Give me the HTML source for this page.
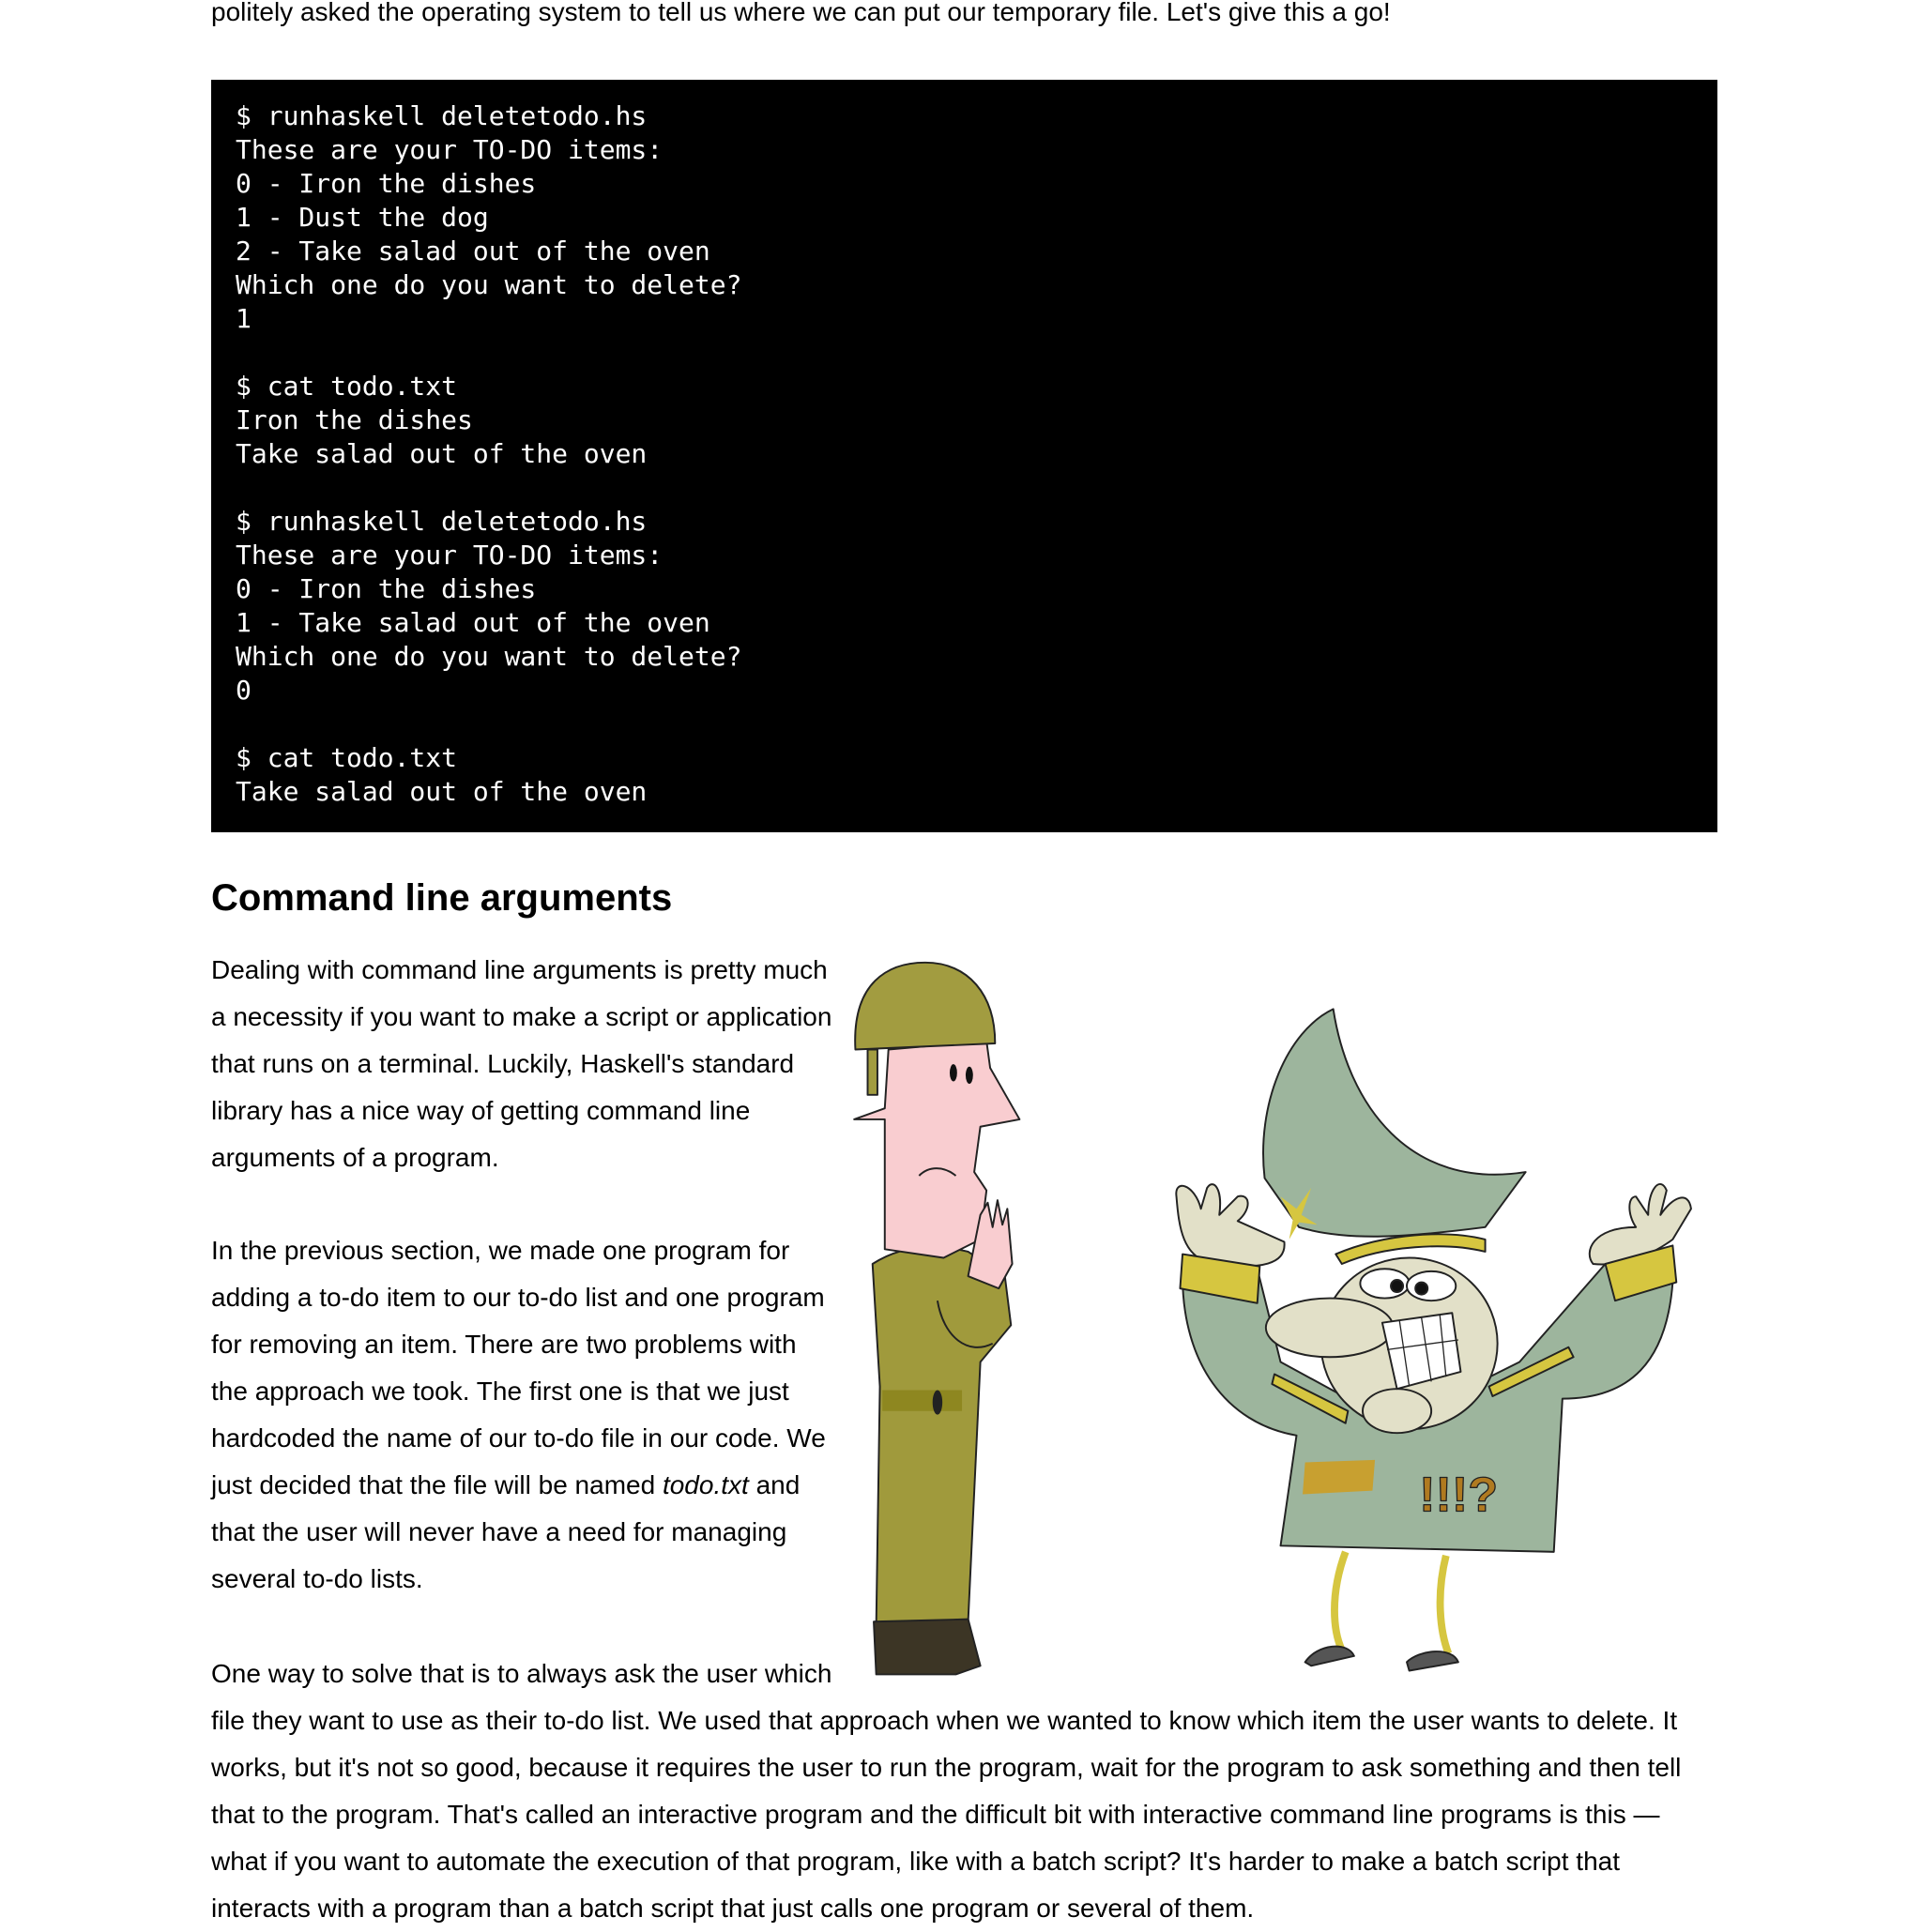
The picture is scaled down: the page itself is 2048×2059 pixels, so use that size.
<!DOCTYPE html>
<html><head><meta charset="utf-8">
<style>
html,body{margin:0;padding:0;background:#fff;}
body{width:2048px;height:2048px;position:relative;overflow:hidden;font-family:"Liberation Sans",Arial,sans-serif;font-size:28px;color:#000;}
.t{position:absolute;left:225px;line-height:50px;white-space:nowrap;}
pre{position:absolute;left:225px;top:85px;width:1605px;height:802px;margin:0;background:#000;color:#fff;box-sizing:border-box;padding:21px 0 0 26px;font-family:"DejaVu Sans Mono","Liberation Mono",monospace;font-size:28px;line-height:36px;}
h2{position:absolute;left:225px;top:932px;margin:0;font-size:40px;line-height:50px;font-weight:bold;white-space:nowrap;}
svg{position:absolute;}
</style></head><body>
<div class="t" style="top:-12px">politely asked the operating system to tell us where we can put our temporary file. Let's give this a go!</div>
<pre>$ runhaskell deletetodo.hs
These are your TO-DO items:
0 - Iron the dishes
1 - Dust the dog
2 - Take salad out of the oven
Which one do you want to delete?
1

$ cat todo.txt
Iron the dishes
Take salad out of the oven

$ runhaskell deletetodo.hs
These are your TO-DO items:
0 - Iron the dishes
1 - Take salad out of the oven
Which one do you want to delete?
0

$ cat todo.txt
Take salad out of the oven</pre>
<h2>Command line arguments</h2>
<div class="t" style="top:1009px">Dealing with command line arguments is pretty much<br>a necessity if you want to make a script or application<br>that runs on a terminal. Luckily, Haskell's standard<br>library has a nice way of getting command line<br>arguments of a program.</div>
<div class="t" style="top:1308px">In the previous section, we made one program for<br>adding a to-do item to our to-do list and one program<br>for removing an item. There are two problems with<br>the approach we took. The first one is that we just<br>hardcoded the name of our to-do file in our code. We<br>just decided that the file will be named <i>todo.txt</i> and<br>that the user will never have a need for managing<br>several to-do lists.</div>
<div class="t" style="top:1759px">One way to solve that is to always ask the user which<br>file they want to use as their to-do list. We used that approach when we wanted to know which item the user wants to delete. It<br>works, but it's not so good, because it requires the user to run the program, wait for the program to ask something and then tell<br>that to the program. That's called an interactive program and the difficult bit with interactive command line programs is this —<br>what if you want to automate the execution of that program, like with a batch script? It's harder to make a batch script that<br>interacts with a program than a batch script that just calls one program or several of them.</div>

<svg style="left:901px;top:1014px" width="914" height="777" viewBox="690 775 700 595" stroke="#222" stroke-width="1.5" stroke-linejoin="round">
 <path d="M712,1030 C740,1012 770,1015 790,1020 L820,1040 L825,1080 L800,1110 L790,1322 L715,1325 L718,1130 Z" fill="#a09a3c"/>
 <path d="M720,1133 L785,1133 L785,1150 L720,1150 Z" fill="#8e8720" stroke="none"/>
 <ellipse cx="765" cy="1143" rx="4" ry="10" fill="#222" stroke="none"/>
 <path d="M713,1322 L790,1320 L800,1358 L780,1365 L715,1365 Z" fill="#3c3525"/>
 <path d="M725,855 L805,848 L808,870 L832,912 L800,918 L795,955 L805,970 L800,1010 L770,1025 L722,1018 L722,912 L697,912 L722,903 Z" fill="#f9cdd0"/>
 <path d="M750,958 C758,950 770,950 780,958" fill="none"/>
 <ellipse cx="778" cy="874" rx="3" ry="7" fill="#111" stroke="none"/>
 <ellipse cx="791" cy="876" rx="3" ry="7" fill="#111" stroke="none"/>
 <path d="M790,1040 L800,990 L806,980 L810,1000 L814,978 L818,998 L822,985 L826,1030 L815,1050 Z" fill="#f9cdd0"/>
 <path d="M765,1060 C770,1090 790,1105 810,1095" fill="none"/>
 <path d="M698,855 C695,800 725,784 755,784 C790,784 812,810 812,850 Z" fill="#a29c40"/>
 <path d="M708,855 L716,855 L716,892 L708,892 Z" fill="#a29c40"/>
 <path d="M965,1040 L1025,1030 L1045,1110 L1100,1140 L1180,1140 L1240,1110 L1310,1030 L1365,1045 C1360,1110 1330,1140 1275,1140 L1268,1265 L1045,1260 L1058,1170 C1000,1160 965,1110 965,1040 Z" fill="#9db59d"/>
 <path d="M1032,960 C1025,900 1050,840 1088,822 C1100,900 1150,970 1245,955 L1212,1000 C1150,1008 1100,1012 1060,1000 Z" fill="#9db59d"/>
 <path d="M1090,1022 C1130,1005 1180,1002 1212,1010 L1212,1020 C1180,1012 1130,1015 1095,1030 Z" fill="#d6c640"/>
 <path d="M1045,975 L1058,985 L1070,968 L1062,990 L1075,998 L1060,996 L1052,1010 L1055,994 Z" fill="#d6c640" stroke="none"/>
 <ellipse cx="1150" cy="1095" rx="72" ry="70" fill="#e2e0c8"/>
 <ellipse cx="1085" cy="1082" rx="52" ry="24" fill="#e2e0c8"/>
 <ellipse cx="1140" cy="1150" rx="28" ry="18" fill="#e2e0c8"/>
 <path d="M1128,1078 L1185,1070 L1192,1118 L1140,1132 Z" fill="#fff"/>
 <path d="M1142,1076 L1150,1130 M1160,1074 L1168,1126 M1175,1072 L1180,1122 M1132,1100 L1190,1092" fill="none" stroke-width="1"/>
 <ellipse cx="1130" cy="1046" rx="20" ry="12" fill="#fff"/>
 <ellipse cx="1168" cy="1048" rx="20" ry="12" fill="#fff"/>
 <circle cx="1140" cy="1048" r="5" fill="#111"/><circle cx="1160" cy="1050" r="5" fill="#111"/>
 <path d="M1040,1120 L1100,1150 L1098,1160 L1038,1128 Z M1280,1098 L1215,1130 L1218,1138 L1284,1106 Z" fill="#d6c640"/>
 <path d="M960,975 C958,960 975,965 980,985 L985,968 C990,960 998,968 995,990 L1010,975 C1020,972 1022,985 1010,995 L1048,1012 C1050,1030 1030,1035 990,1030 C965,1025 962,1000 960,975 Z" fill="#e2e0c8"/>
 <path d="M1380,985 C1378,970 1365,975 1355,990 L1360,970 C1355,958 1345,968 1345,990 L1335,975 C1328,975 1328,990 1335,1000 C1300,1000 1292,1020 1300,1030 C1320,1032 1345,1025 1365,1010 Z" fill="#e2e0c8"/>
 <path d="M965,1022 L1028,1032 L1026,1062 L963,1050 Z M1310,1030 L1365,1015 L1368,1045 L1318,1060 Z" fill="#d6c640"/>
 <path d="M1065,1192 L1122,1190 L1120,1215 L1063,1218 Z" fill="#c8a030" stroke="none"/>
 <text x="1158" y="1232" font-family="Liberation Sans,sans-serif" font-weight="bold" font-size="40" fill="#b07a20" stroke="#222" stroke-width="1">!!!?</text>
 <path d="M1098,1265 C1085,1300 1088,1330 1095,1345 M1180,1268 C1172,1300 1175,1330 1182,1348" fill="none" stroke="#d6c640" stroke-width="6"/>
 <path d="M1065,1355 C1075,1340 1100,1338 1105,1350 L1070,1358 Z M1148,1355 C1158,1345 1185,1342 1190,1355 L1150,1362 Z" fill="#555"/>
</svg>
</body></html>
